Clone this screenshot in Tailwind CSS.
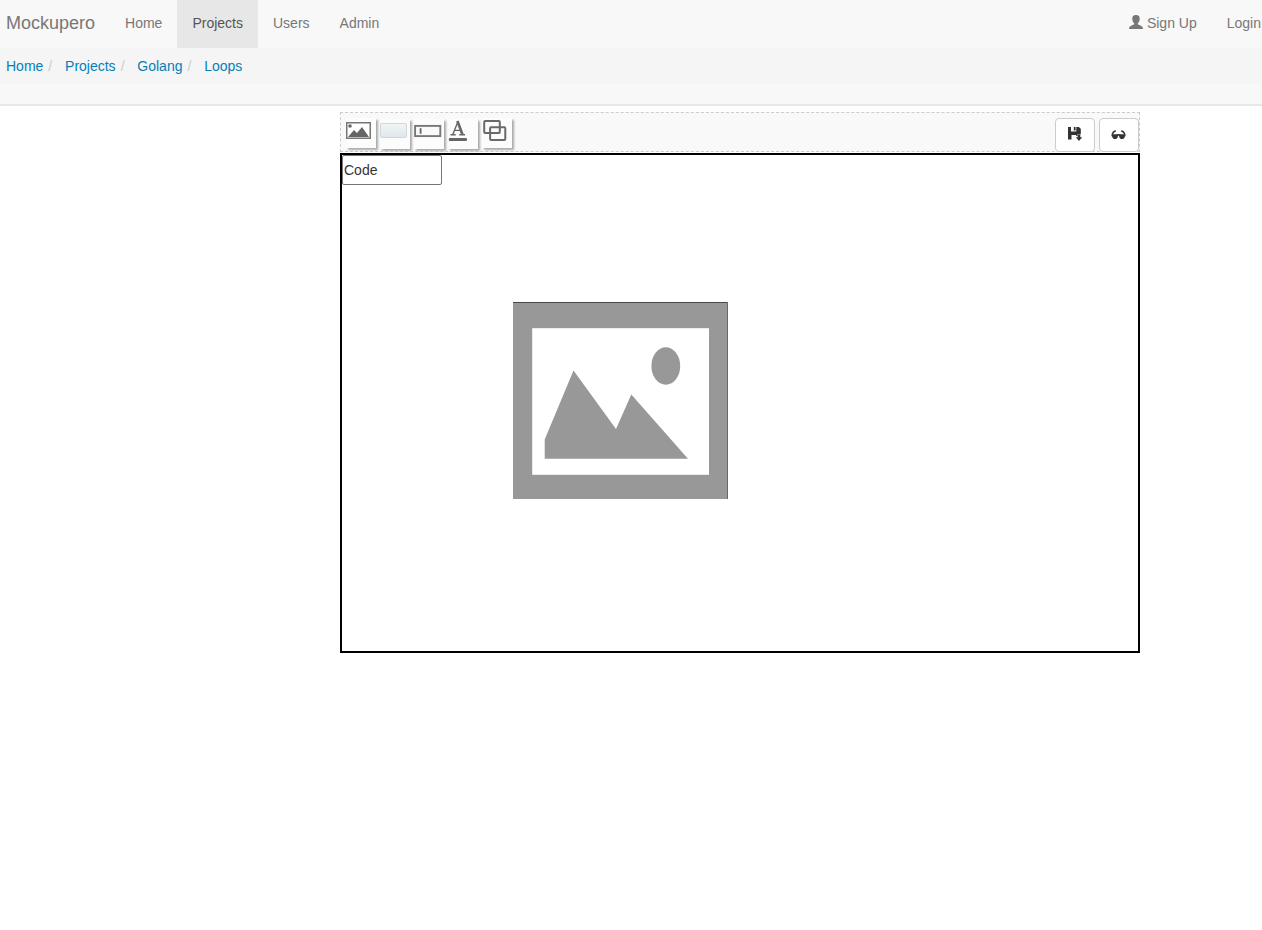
<!DOCTYPE html>
<html lang="en">
<head>
<meta charset="utf-8">
<title>Mockupero</title>
<script src="https://cdn.jsdelivr.net/npm/@tailwindcss/browser@4"></script>
</head>
<body class="bg-white text-[14px] leading-5 text-[#333] font-['Liberation_Sans',Arial,sans-serif] overflow-hidden">
<header class="h-[106px] bg-[#f8f8f8] border-b-2 border-[#e7e7e7]">
  <nav class="flex h-12 text-[#777] whitespace-nowrap">
    <a class="pl-1.5 pr-[15px] pt-[13px] text-[18px]">Mockupero</a>
    <a class="px-[15px] pt-[13px]">Home</a>
    <a class="px-[15px] pt-[13px] bg-[#e7e7e7] text-[#555]">Projects</a>
    <a class="px-[15px] pt-[13px]">Users</a>
    <a class="px-[15px] pt-[13px]">Admin</a>
    <div class="ml-auto flex">
      <a class="flex px-[15px] pt-[13px] gap-1"><svg class="w-[14px] h-[14px] mt-[2px]" viewBox="0 0 14 14" fill="currentColor"><path d="M7 0C4.2 0 3.1 1.5 3.3 3.9C3.4 6 4.3 7.5 5.2 8.3V9.3C4.4 10 1 10.9 .3 12.2C0 12.8 0 13.4 0 14H14C14 13.4 14 12.8 13.7 12.2C13 10.9 9.6 10 8.8 9.3V8.3C9.700 7.500 10.600 6 10.700 3.900C10.900 1.500 9.800 0 7 0Z"/></svg>Sign Up</a>
      <a class="pl-[15px] pr-px pt-[13px]">Login</a>
    </div>
  </nav>
  <ol class="flex h-9 bg-[#f5f5f5] pl-1.5 pt-2 text-[#0480b8]">
    <li>Home<span class="pl-[5px] pr-[12.8px] text-[#ccc]">/</span></li>
    <li>Projects<span class="pl-[5px] pr-[12.8px] text-[#ccc]">/</span></li>
    <li>Golang<span class="pl-[5px] pr-[12.8px] text-[#ccc]">/</span></li>
    <li>Loops</li>
  </ol>
</header>
<main class="w-[800px] ml-[340px] mt-1.5">
  <div class="flex h-10 mb-px bg-[#f9f9f9] border border-dashed border-[#ccc] pl-[5px] pt-[5px]">
    <div class="flex gap-1">
      <div class="size-[30px] bg-[#fcfcfc] shadow-[2px_2px_2px_#aaa]"><svg class="size-[30px]" viewBox="0 0 30 30"><rect x=".75" y="4.75" width="23.5" height="15.5" fill="#fff" stroke="#777" stroke-width="1.5"/><circle cx="4" cy="8" r="1.8" fill="#666"/><path d="M2 19L8 12L11 15L16 9L23 19Z" fill="#666"/></svg></div>
      <div class="size-[30px] mt-px bg-[#fcfcfc] shadow-[2px_2px_2px_#aaa] pt-1"><div class="w-[27px] h-[15px] rounded-[2px] border border-[#cfd8dd] bg-linear-to-b from-[#f1f5f6] to-[#e0e7ea]"></div></div>
      <div class="size-[30px] mt-px bg-[#fcfcfc] shadow-[2px_2px_2px_#aaa]"><svg class="size-[30px]" viewBox="0 0 30 30"><rect x="1.1" y="6.9" width="25.2" height="10.2" fill="#fafafa" stroke="#777" stroke-width="1.9"/><path d="M6.6 9.2V14.8" stroke="#666" stroke-width="1.8"/></svg></div>
      <div class="size-[30px] mt-px bg-[#fcfcfc] shadow-[2px_2px_2px_#aaa]"><svg class="size-[30px]" viewBox="0 0 30 30"><g fill="none" stroke="#666"><path d="M4.8 15.5L10 2.5" stroke-width="1.4"/><path d="M9.4 2L14.5 15.5" stroke-width="2.6"/><path d="M6.3 11.4H12.5M2.500 15.800H7.700M11.300 15.800H17" stroke-width="1.4"/></g><rect x=".8" y="19" width="18.2" height="3" rx="1" fill="#666"/></svg></div>
      <div class="size-[30px] bg-[#fcfcfc] shadow-[2px_2px_2px_#aaa]"><svg class="size-[30px]" viewBox="0 0 30 30"><g fill="none" stroke="#6a6a6a" stroke-width="2"><rect x="2.2" y="3" width="15.6" height="12" rx="1"/><rect x="8.1" y="9.3" width="15.2" height="12.700" rx="1"/></g></svg></div>
    </div>
    <div class="ml-auto flex gap-1 text-[#333]">
      <button class="w-10 h-[34px] bg-white border border-[#ccc] rounded-[4px] flex justify-center pt-2"><svg class="size-[14px]" viewBox="0 0 14 14" fill="currentColor"><path d="M0 0H3V4.500H8.300V0H10.800L12.800 1.800V7.300H9.500V9H8.200V8H3.500V12.500H0ZM5.800 0H7.600V3.600H5.800Z"/><path d="M9.700 7.600H12.300V10.300H14.200L11 14L7.800 10.300H9.700Z"/></svg></button>
      <button class="w-10 h-[34px] bg-white border border-[#ccc] rounded-[4px] flex justify-center pt-[9px]"><svg class="w-[15px] h-[14px] -ml-px" viewBox="0 0 14 14" fill="none" stroke="currentColor"><path d="M4.3 3.2Q2.8 2.900 1.700 4.500L.7 6.500M9.700 3.200Q11.200 2.900 12.300 4.500L13.300 6.500M5.500 7.200Q7 6.500 8.500 7.200" stroke-width="1.6"/><path d="M0 6.200H6.400V8.200Q6 11 3.600 11Q.9 11 .6 8.200H0ZM14 6.200H7.600V8.200Q8 11 10.400 11Q13.100 11 13.400 8.200H14Z" fill="currentColor" stroke="none"/></svg></button>
    </div>
  </div>
  <div class="h-[500px] border-2 border-black">
    <div class="w-[100px] h-[30px] border border-[#767676] rounded-[2px] pl-px pt-1">Code</div>
    <svg class="block w-[215px] h-[197px] ml-[171px] mt-[117px]" viewBox="0 0 215 197"><rect width="215" height="197" fill="#989898"/><path d="M0 .5H214.5" stroke="#484848"/><path d="M214.500 1V197" stroke="#686868"/><rect x="19.200" y="26.200" width="176.800" height="146.600" fill="#fff"/><path d="M60.5 68.5L103 127L118.300 92.500L175 156.800H31.700V137.500Z" fill="#989898"/><ellipse cx="152.800" cy="64" rx="14.400" ry="18.700" fill="#989898"/></svg>
  </div>
</main>
</body>
</html>
